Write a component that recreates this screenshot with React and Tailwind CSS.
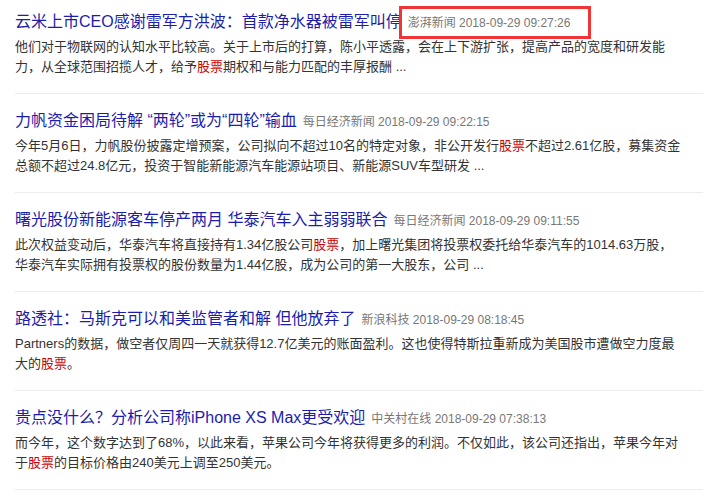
import React from "react";

const items = [
  {
    title: "云米上市CEO感谢雷军方洪波：首款净水器被雷军叫停",
    source: "澎湃新闻 2018-09-29 09:27:26",
    body: [
      "他们对于物联网的认知水平比较高。关于上市后的打算，陈小平透露，会在上下游扩张，提高产品的宽度和研发能力，从全球范围招揽人才，给予",
      "期权和与能力匹配的丰厚报酬 ...",
    ],
  },
  {
    title: "力帆资金困局待解 “两轮”或为“四轮”输血",
    source: "每日经济新闻 2018-09-29 09:22:15",
    body: [
      "今年5月6日，力帆股份披露定增预案，公司拟向不超过10名的特定对象，非公开发行",
      "不超过2.61亿股，募集资金总额不超过24.8亿元，投资于智能新能源汽车能源站项目、新能源SUV车型研发 ...",
    ],
  },
  {
    title: "曙光股份新能源客车停产两月 华泰汽车入主弱弱联合",
    source: "每日经济新闻 2018-09-29 09:11:55",
    body: [
      "此次权益变动后，华泰汽车将直接持有1.34亿股公司",
      "，加上曙光集团将投票权委托给华泰汽车的1014.63万股，华泰汽车实际拥有投票权的股份数量为1.44亿股，成为公司的第一大股东，公司 ...",
    ],
  },
  {
    title: "路透社：马斯克可以和美监管者和解 但他放弃了",
    source: "新浪科技 2018-09-29 08:18:45",
    body: [
      "Partners的数据，做空者仅周四一天就获得12.7亿美元的账面盈利。这也使得特斯拉重新成为美国股市遭做空力度最大的",
      "。",
    ],
  },
  {
    title: "贵点没什么？分析公司称iPhone XS Max更受欢迎",
    source: "中关村在线 2018-09-29 07:38:13",
    body: [
      "而今年，这个数字达到了68%，以此来看，苹果公司今年将获得更多的利润。不仅如此，该公司还指出，苹果今年对于",
      "的目标价格由240美元上调至250美元。",
    ],
  },
];

export default function App() {
  return (
    <div
      className="relative w-[706px] h-[499px] overflow-hidden bg-white"
      style={{ fontFamily: '"Liberation Sans", Arial, "Noto Sans CJK SC", sans-serif' }}
    >
      <div className="ml-[15px] w-[688px] flex flex-col">
        {items.map((it, i) => (
          <div
            key={i}
            className={`${i === 0 ? "pt-[10px]" : "pt-[15px]"} pb-[16px] border-b border-[#ececec]`}
          >
            <div className="h-[24px] leading-[24px] whitespace-nowrap">
              <span className="text-[16px] text-[#1d1dab]">{it.title}</span>
              <span className="ml-[6px] text-[12px] text-[#777777]">{it.source}</span>
            </div>
            <p className="mt-[3px] w-[667px] text-[13px] leading-[20px] text-[#333333]">
              {it.body[0]}
              <span className="text-[#cc0000]">股票</span>
              {it.body[1]}
            </p>
          </div>
        ))}
      </div>
      <div className="absolute left-[399px] top-[6px] w-[192px] h-[33px] border-[3px] border-[#ef3535]" />
    </div>
  );
}
